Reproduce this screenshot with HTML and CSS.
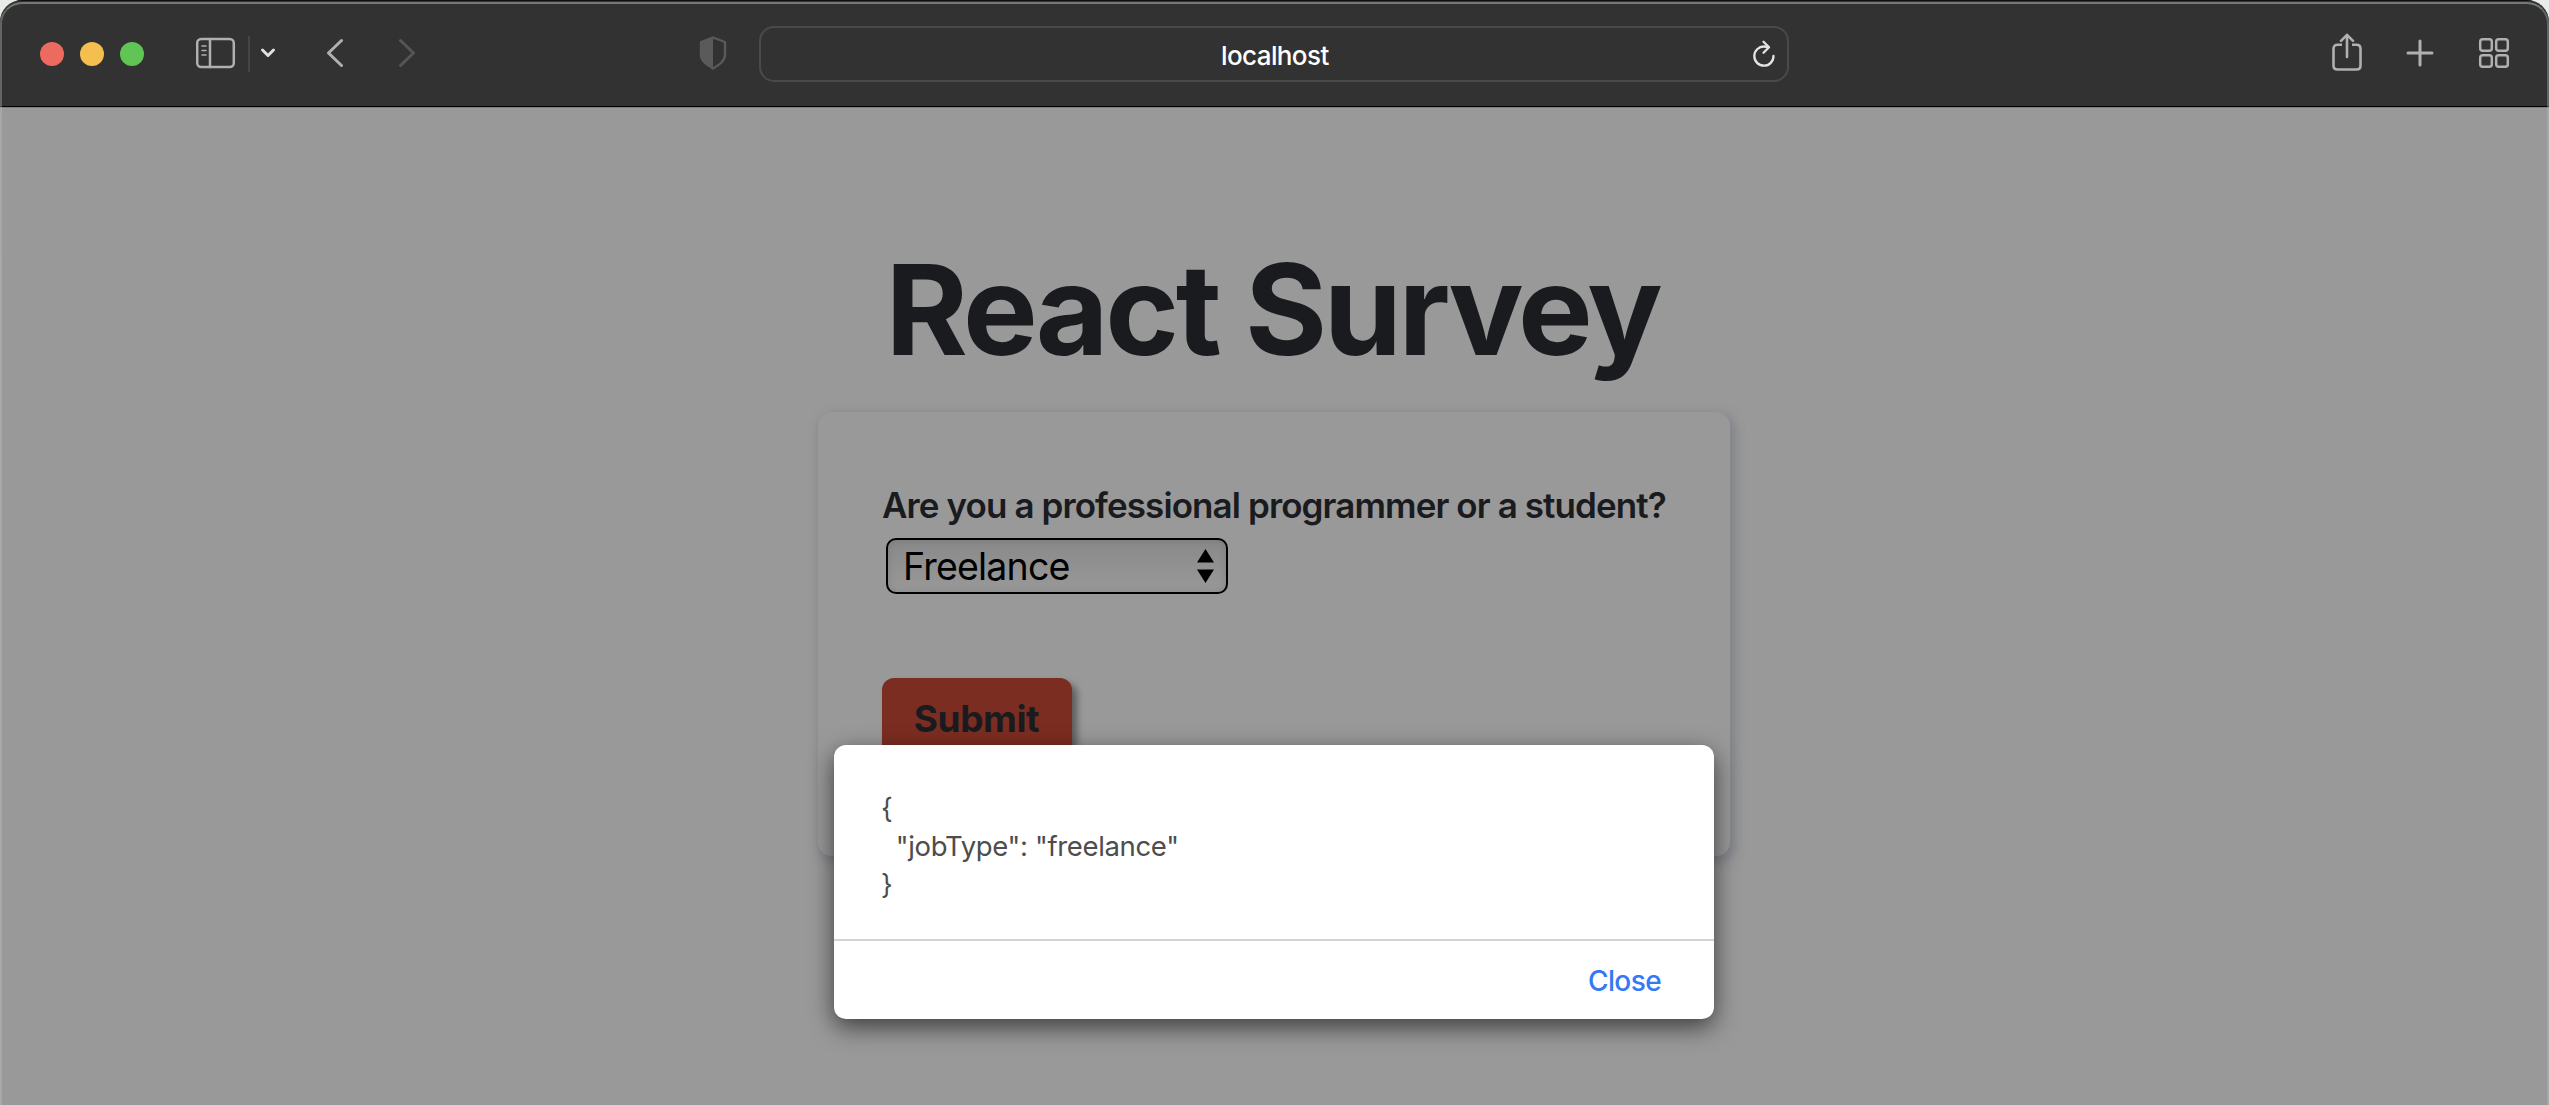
FILE: index.html
```html
<!DOCTYPE html>
<html lang="en">
<head>
<meta charset="utf-8">
<title>React Survey</title>
<link rel="stylesheet" href="styles.css">
</head>
<body>
<div class="window">
  <header class="toolbar">
    <div class="lights"><i class="light red"></i><i class="light yellow"></i><i class="light green"></i></div>
    <svg class="icon sidebar" width="40" height="32" viewBox="0 0 40 32" fill="none" stroke="#b0b0b0" stroke-width="2.5" stroke-linecap="round"><rect x="1.2" y="2" width="36.6" height="28" rx="4"/><path d="M14 2v28"/><path stroke-width="1.6" d="M6 9h4M6 13.500h4M6 18h4"/></svg>
    <span class="divider"></span>
    <svg class="icon chevron" width="16" height="12" viewBox="0 0 16 12" fill="none" stroke="#e0e0e0" stroke-width="3" stroke-linecap="round" stroke-linejoin="round"><path d="M2.500 3l5.500 5.500 5.500-5.500"/></svg>
    <svg class="icon back" width="17" height="30" viewBox="0 0 17 30" fill="none" stroke="#b0b0b0" stroke-width="3" stroke-linecap="round" stroke-linejoin="round"><path d="M15.500 2.500L2.500 15l13 12.500"/></svg>
    <svg class="icon forward" width="17" height="30" viewBox="0 0 17 30" fill="none" stroke="#555" stroke-width="3" stroke-linecap="round" stroke-linejoin="round"><path d="M2.500 2.500L15.500 15l-13 12.500"/></svg>
    <svg class="icon shield" width="28" height="34" viewBox="0 0 28 34"><path d="M14 1.500L26 6v13c0 6-5.500 9.500-12 13.500C7.500 28.500 2 25 2 19V6z" fill="none" stroke="#5a5a5a" stroke-width="2.400" stroke-linejoin="round"/><path d="M14 1L1.500 6v13c0 6 5.500 10 12.500 14z" fill="#5a5a5a"/></svg>
    <div class="address">
      <span class="host">localhost</span>
      <svg class="reload" width="22" height="28" viewBox="0 0 22 28" fill="none" stroke="#e4e4e4" stroke-width="2.300" stroke-linecap="round" stroke-linejoin="round"><path d="M20.500 16A9.600 9.600 0 1 1 11 6.500q2.500 0 4.500.700"/><path d="M10.500 1.800l5.500 5.400-5.500 5.500"/></svg>
    </div>
    <div class="actions">
      <svg class="share" width="30" height="38" viewBox="0 0 30 38" fill="none" stroke="#b0b0b0" stroke-width="2.600" stroke-linecap="butt" stroke-linejoin="round"><path d="M10 11.800H5.500q-4 0-4 4v16.700q0 4 4 4h19q4 0 4-4V15.800q0-4-4-4H20"/><path stroke-linecap="round" d="M15 24V1.800M9 7.800l6-6 6 6"/></svg>
      <svg class="plus" width="28" height="28" viewBox="0 0 28 28" fill="none" stroke="#b0b0b0" stroke-width="3" stroke-linecap="round"><path d="M14 2v24M2 14h24"/></svg>
      <svg width="32" height="32" viewBox="0 0 32 32" fill="none" stroke="#b0b0b0" stroke-width="2.500"><rect x="2.200" y="2.200" width="11.600" height="11.600" rx="2.500"/><rect x="18.200" y="2.200" width="11.600" height="11.600" rx="2.500"/><rect x="2.200" y="18.200" width="11.600" height="11.600" rx="2.500"/><rect x="18.200" y="18.200" width="11.600" height="11.600" rx="2.500"/></svg>
    </div>
  </header>
  <main class="page">
    <h1 class="title">React Survey</h1>
    <form class="card">
      <label class="question">Are you a professional programmer or a student?</label>
      <div class="select"><span class="value">Freelance</span><svg width="17" height="34" viewBox="0 0 17 34"><path d="M8.500 0L17 13.500H0zM0 20.500h17L8.500 34z"/></svg></div>
      <button class="submit" type="button"><span class="submit-text">Submit</span></button>
    </form>
  </main>
  <section class="dialog">
    <pre class="message"><span class="line brace">{</span>
<span class="line entry">  "jobType": "freelance"</span>
<span class="line brace">}</span></pre>
    <footer class="footer"><span class="close">Close</span></footer>
  </section>
</div>
</body>
</html>
```
FILE: styles.css
```css
* { box-sizing: border-box; }
body { margin: 0; background: #e8ece9; font-family: Inter, "Liberation Sans", sans-serif; }
.window { position: relative; height: 1105px; border-radius: 22px 22px 0 0; overflow: hidden; background: #999; }
.window::after { content: ""; position: absolute; inset: 2px 0 -4px 0; border: 2px solid rgba(190, 200, 190, .35); border-top-color: #747a75; border-radius: 22px 22px 0 0; pointer-events: none; }
.toolbar { display: flex; align-items: center; height: 107px; padding: 1px 39px 0 40px; background: #323232; border-top: 1px solid #111; border-bottom: 1px solid #000; }
.lights { display: flex; gap: 16px; }
.light { width: 24px; height: 24px; border-radius: 50%; }
.red { background: #ed6a5f; }
.yellow { background: #f5bf4f; }
.green { background: #61c555; }
.icon { flex: none; margin-top: -2px; }
.sidebar { margin-left: 52px; }
.divider { width: 2px; height: 36px; margin-left: 12px; background: #464646; }
.chevron { margin-left: 10px; }
.back { margin-left: 50px; }
.forward { margin-left: 55px; }
.shield { margin-left: 284px; }
.address { display: flex; align-items: center; width: 1030px; height: 56px; margin-left: 32px; padding: 0 12px 0 460px; border: 2px solid #4a4a4a; border-radius: 15px; }
.host { padding-top: 2px; color: #fff; font-size: 26px; font-weight: 500; letter-spacing: -.6px; white-space: nowrap; }
.reload { margin-left: auto; }
.actions { display: flex; align-items: center; margin: -2px 0 0 auto; gap: 44px; }
.share { margin-top: -3px; }
.plus { margin-top: -1px; }
.page { display: flex; flex-direction: column; align-items: center; padding-right: 1px; border-top: 1px solid #808080; }
.title { margin: 124px 3px 0 0; height: 180px; line-height: 154px; font-size: 125.5px; font-weight: 700; letter-spacing: -3.3px; color: #1a1b1e; white-space: nowrap; }
.card { display: flex; flex-direction: column; align-items: flex-start; width: 912px; height: 444px; padding: 70px 64px; border-radius: 14px; box-shadow: 3px 4px 9px 3px rgba(112, 116, 126, .5); }
.question { height: 56px; line-height: 47px; font-size: 35px; font-weight: 600; letter-spacing: -.9px; color: #1a1b1e; white-space: nowrap; }
.select { display: flex; align-items: center; justify-content: space-between; width: 342px; height: 56px; margin-left: 4px; padding: 0 12px 0 15px; border: 2px solid #000; border-radius: 10px; background: linear-gradient(#898989, #999); box-shadow: inset 0 0 8px rgba(0, 0, 0, .12); color: #000; font-size: 37.5px; letter-spacing: -.8px; }
.submit { width: 190px; height: 84px; margin-top: 84px; padding: 0 1px 3px 0; border: 0; border-radius: 12px; background: #7b2d22; color: #1a1b1e; font: 700 37px Inter, sans-serif; letter-spacing: -.4px; box-shadow: 5px 5px 7px rgba(0, 0, 0, .4); }
.dialog { position: absolute; left: 834px; top: 745px; width: 880px; height: 274px; border-radius: 12px; background: #fff; box-shadow: 0 8px 24px rgba(0, 0, 0, .6); }
.message { margin: 0; height: 196px; padding: 44px 47px 0; border-bottom: 2px solid #d4d4d4; color: #4d4d4d; font: 400 27.5px/38px Inter, sans-serif; letter-spacing: -.35px; }
.footer { display: flex; justify-content: flex-end; align-items: center; height: 78px; padding: 2px 53px 0; }
.close { color: #3478f6; font-size: 28px; font-weight: 450; letter-spacing: -.6px; }
```
